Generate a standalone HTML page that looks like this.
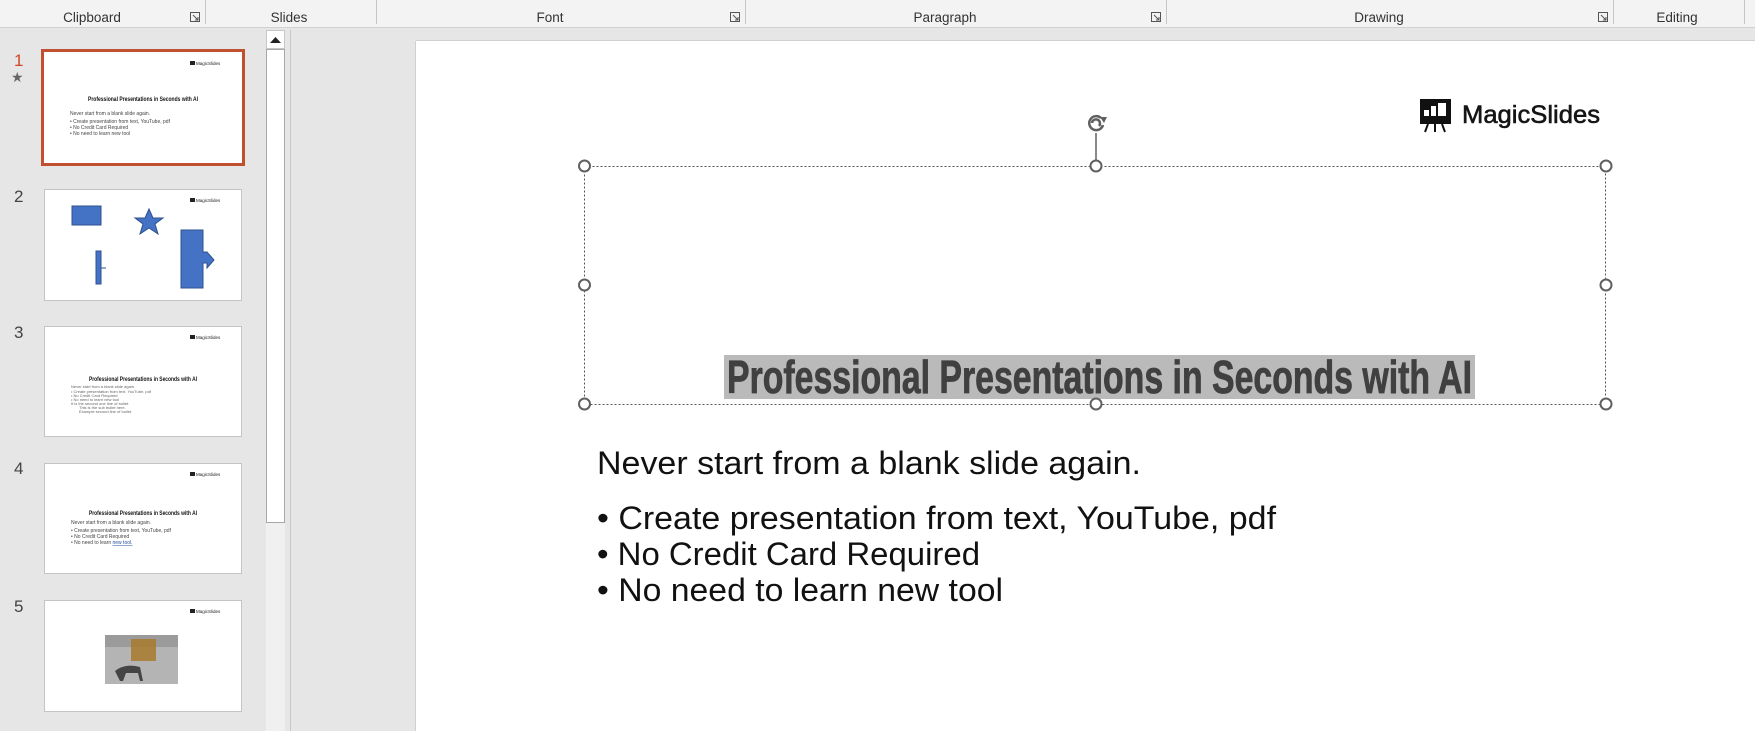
<!DOCTYPE html>
<html><head><meta charset="utf-8"><style>
html,body{margin:0;padding:0;width:1755px;height:731px;overflow:hidden;background:#e6e6e6;font-family:"Liberation Sans",sans-serif}
svg{position:absolute;left:0;top:0}
</style></head><body>
<svg width="1755" height="731" viewBox="0 0 1755 731" xmlns="http://www.w3.org/2000/svg" font-family="Liberation Sans, sans-serif">
<!-- ribbon -->
<rect x="0" y="0" width="1755" height="27" fill="#f3f3f3"/>
<line x1="0" y1="27.5" x2="1755" y2="27.5" stroke="#d2d2d2"/>
<g stroke="#c6c6c6">
<line x1="205.5" y1="0" x2="205.5" y2="24"/><line x1="376.5" y1="0" x2="376.5" y2="24"/>
<line x1="745.5" y1="0" x2="745.5" y2="24"/><line x1="1166.5" y1="0" x2="1166.5" y2="24"/>
<line x1="1613.5" y1="0" x2="1613.5" y2="24"/><line x1="1744.5" y1="0" x2="1744.5" y2="24"/>
</g>
<g font-size="13.5" fill="#333" text-anchor="middle">
<text x="92" y="22">Clipboard</text><text x="289" y="22">Slides</text><text x="550" y="22">Font</text>
<text x="945" y="22">Paragraph</text><text x="1379" y="22">Drawing</text><text x="1677" y="22">Editing</text>
</g>
<g fill="none" stroke="#555" stroke-width="1">
<path d="M190.5 12.5h9v9h-9zM193 15l5 5M198 17v3h-3"/>
<path d="M730.5 12.5h9v9h-9zM733 15l5 5M738 17v3h-3"/>
<path d="M1151.5 12.5h9v9h-9zM1154 15l5 5M1159 17v3h-3"/>
<path d="M1598.5 12.5h9v9h-9zM1601 15l5 5M1606 17v3h-3"/>
</g>
<!-- scrollbar -->
<rect x="266" y="30" width="19" height="701" fill="#f0f0f0"/>
<rect x="266.5" y="30.5" width="18" height="18" fill="#fff" stroke="#c8c8c8"/>
<path d="M270 43h11l-5.5-6z" fill="#222"/>
<rect x="266.5" y="49.5" width="18" height="473" fill="#fff" stroke="#a8a8a8"/>
<line x1="290.5" y1="30" x2="290.5" y2="731" stroke="#c8c8c8"/>
<!-- thumbnails -->
<text x="14" y="66" font-size="17" fill="#d24726">1</text>
<text x="11" y="82" font-size="14" fill="#666">★</text>
<g font-size="17" fill="#444"><text x="14" y="202">2</text><text x="14" y="338">3</text><text x="14" y="474">4</text><text x="14" y="612">5</text></g>
<rect x="42.5" y="50.5" width="201" height="114" fill="#fff" stroke="#c0502f" stroke-width="3"/>
<g transform="translate(45,53)">
<rect x="145" y="8" width="5" height="4" fill="#222"/><text x="151" y="12" font-size="4.5" fill="#222">MagicSlides</text>
<text x="43" y="48" font-size="6.5" font-weight="bold" fill="#111" textLength="110" lengthAdjust="spacingAndGlyphs">Professional Presentations in Seconds with AI</text>
<g font-size="5" fill="#444"><text x="25" y="62">Never start from a blank slide again.</text><text x="25" y="70">• Create presentation from text, YouTube, pdf</text><text x="25" y="76">• No Credit Card Required</text><text x="25" y="82">• No need to learn new tool</text></g>
</g>
<rect x="44.5" y="189.5" width="197" height="111" fill="#fff" stroke="#c4c4c4"/>
<g transform="translate(45,190)">
<rect x="145" y="8" width="5" height="4" fill="#222"/><text x="151" y="12" font-size="4.5" fill="#222">MagicSlides</text>
<rect x="27" y="16" width="29" height="19" fill="#4472c4" stroke="#2f528f"/>
<path d="M104 19l4 9 10 0-8 6 3 10-9-6-9 6 3-10-8-6 10 0z" fill="#4472c4" stroke="#2f528f"/>
<rect x="51" y="61" width="5" height="33" fill="#4472c4" stroke="#2f528f"/><line x1="56" y1="78" x2="61" y2="78" stroke="#2f528f"/>
<path d="M136 40h22v22h4l7 8-7 8v-5h-4v25h-22z" fill="#4472c4" stroke="#2f528f"/>
</g>
<rect x="44.5" y="326.5" width="197" height="110" fill="#fff" stroke="#c4c4c4"/>
<g transform="translate(45,327)">
<rect x="145" y="8" width="5" height="4" fill="#222"/><text x="151" y="12" font-size="4.5" fill="#222">MagicSlides</text>
<text x="44" y="54" font-size="6.5" font-weight="bold" fill="#111" textLength="108" lengthAdjust="spacingAndGlyphs">Professional Presentations in Seconds with AI</text>
<g font-size="4" fill="#666"><text x="26" y="61">Never start from a blank slide again.</text><text x="26" y="66">• Create presentation from text, YouTube, pdf</text><text x="26" y="70">• No Credit Card Required</text><text x="26" y="74">• No need to learn new tool</text><text x="26" y="78">It is the second one line of bullet.</text><text x="34" y="82">This is the sub bullet here.</text><text x="34" y="86">Example second line of bullet.</text></g>
</g>
<rect x="44.5" y="463.5" width="197" height="110" fill="#fff" stroke="#c4c4c4"/>
<g transform="translate(45,464)">
<rect x="145" y="8" width="5" height="4" fill="#222"/><text x="151" y="12" font-size="4.5" fill="#222">MagicSlides</text>
<text x="44" y="51" font-size="6.5" font-weight="bold" fill="#111" textLength="108" lengthAdjust="spacingAndGlyphs">Professional Presentations in Seconds with AI</text>
<g font-size="5" fill="#444"><text x="26" y="60">Never start from a blank slide again.</text><text x="26" y="68">• Create presentation from text, YouTube, pdf</text><text x="26" y="74">• No Credit Card Required</text><text x="26" y="80">• No need to learn <tspan fill="#1f4e9f" text-decoration="underline">new tool.</tspan></text></g>
</g>
<rect x="44.5" y="600.5" width="197" height="111" fill="#fff" stroke="#c4c4c4"/>
<g transform="translate(45,601)">
<rect x="145" y="8" width="5" height="4" fill="#222"/><text x="151" y="12" font-size="4.5" fill="#222">MagicSlides</text>
<rect x="60" y="34" width="73" height="49" fill="#b4b4b4"/>
<rect x="60" y="34" width="73" height="12" fill="#8a8a8a" opacity="0.6"/>
<rect x="86" y="38" width="25" height="22" fill="#a87a2c" opacity="0.85"/>
<path d="M70 70q10-8 25-4l3 14h-3l-2-8-12 0-3 8h-3z" fill="#444"/>
</g>
<!-- slide -->
<rect x="416" y="41" width="1339" height="690" fill="#fff"/>
<line x1="415.5" y1="41" x2="415.5" y2="731" stroke="#d0d0d0"/>
<line x1="416" y1="40.5" x2="1755" y2="40.5" stroke="#d0d0d0"/>
<!-- logo -->
<rect x="1420" y="99" width="31" height="25" fill="#111"/>
<rect x="1424" y="110" width="5" height="6" fill="#fff"/><rect x="1431" y="106" width="5" height="10" fill="#fff"/><rect x="1438" y="103" width="8" height="13" fill="#fff"/>
<path d="M1428 124l-3 8M1435 124v8M1442 124l3 8" stroke="#111" stroke-width="2"/>
<text x="1462" y="123" font-size="25" fill="#151515" stroke="#151515" stroke-width="0.6" textLength="138" lengthAdjust="spacingAndGlyphs">MagicSlides</text>
<!-- title box -->
<rect x="584.5" y="166.5" width="1021" height="238" fill="none" stroke="#555" stroke-dasharray="2,2"/>
<rect x="724" y="355" width="751" height="44" fill="#bababa"/>
<text x="727" y="393" font-size="46" font-weight="bold" fill="#404040" stroke="#404040" stroke-width="0.8" textLength="745" lengthAdjust="spacingAndGlyphs">Professional Presentations in Seconds with AI</text>
<line x1="1096" y1="133" x2="1096" y2="166" stroke="#606060" stroke-width="1.5"/>
<path d="M1103 125a7 7 0 1 1-2-7M1092 123a4 4 0 1 1 7 3" fill="none" stroke="#606060" stroke-width="2.5"/>
<path d="M1100 117l7 0-3 6z" fill="#606060"/>
<g fill="#fff" stroke="#606060" stroke-width="2">
<circle cx="584.5" cy="166" r="5.5"/><circle cx="1096" cy="166" r="5.5"/><circle cx="1606" cy="166" r="5.5"/>
<circle cx="584.5" cy="285" r="5.5"/><circle cx="1606" cy="285" r="5.5"/>
<circle cx="584.5" cy="404" r="5.5"/><circle cx="1096" cy="404" r="5.5"/><circle cx="1606" cy="404" r="5.5"/>
</g>
<!-- body -->
<g font-size="32" fill="#111">
<text x="597" y="474" textLength="544" lengthAdjust="spacingAndGlyphs">Never start from a blank slide again.</text>
<text x="597" y="529" textLength="679" lengthAdjust="spacingAndGlyphs">• Create presentation from text, YouTube, pdf</text>
<text x="597" y="565" textLength="383" lengthAdjust="spacingAndGlyphs">• No Credit Card Required</text>
<text x="597" y="601" textLength="406" lengthAdjust="spacingAndGlyphs">• No need to learn new tool</text>
</g>
</svg>
</body></html>
